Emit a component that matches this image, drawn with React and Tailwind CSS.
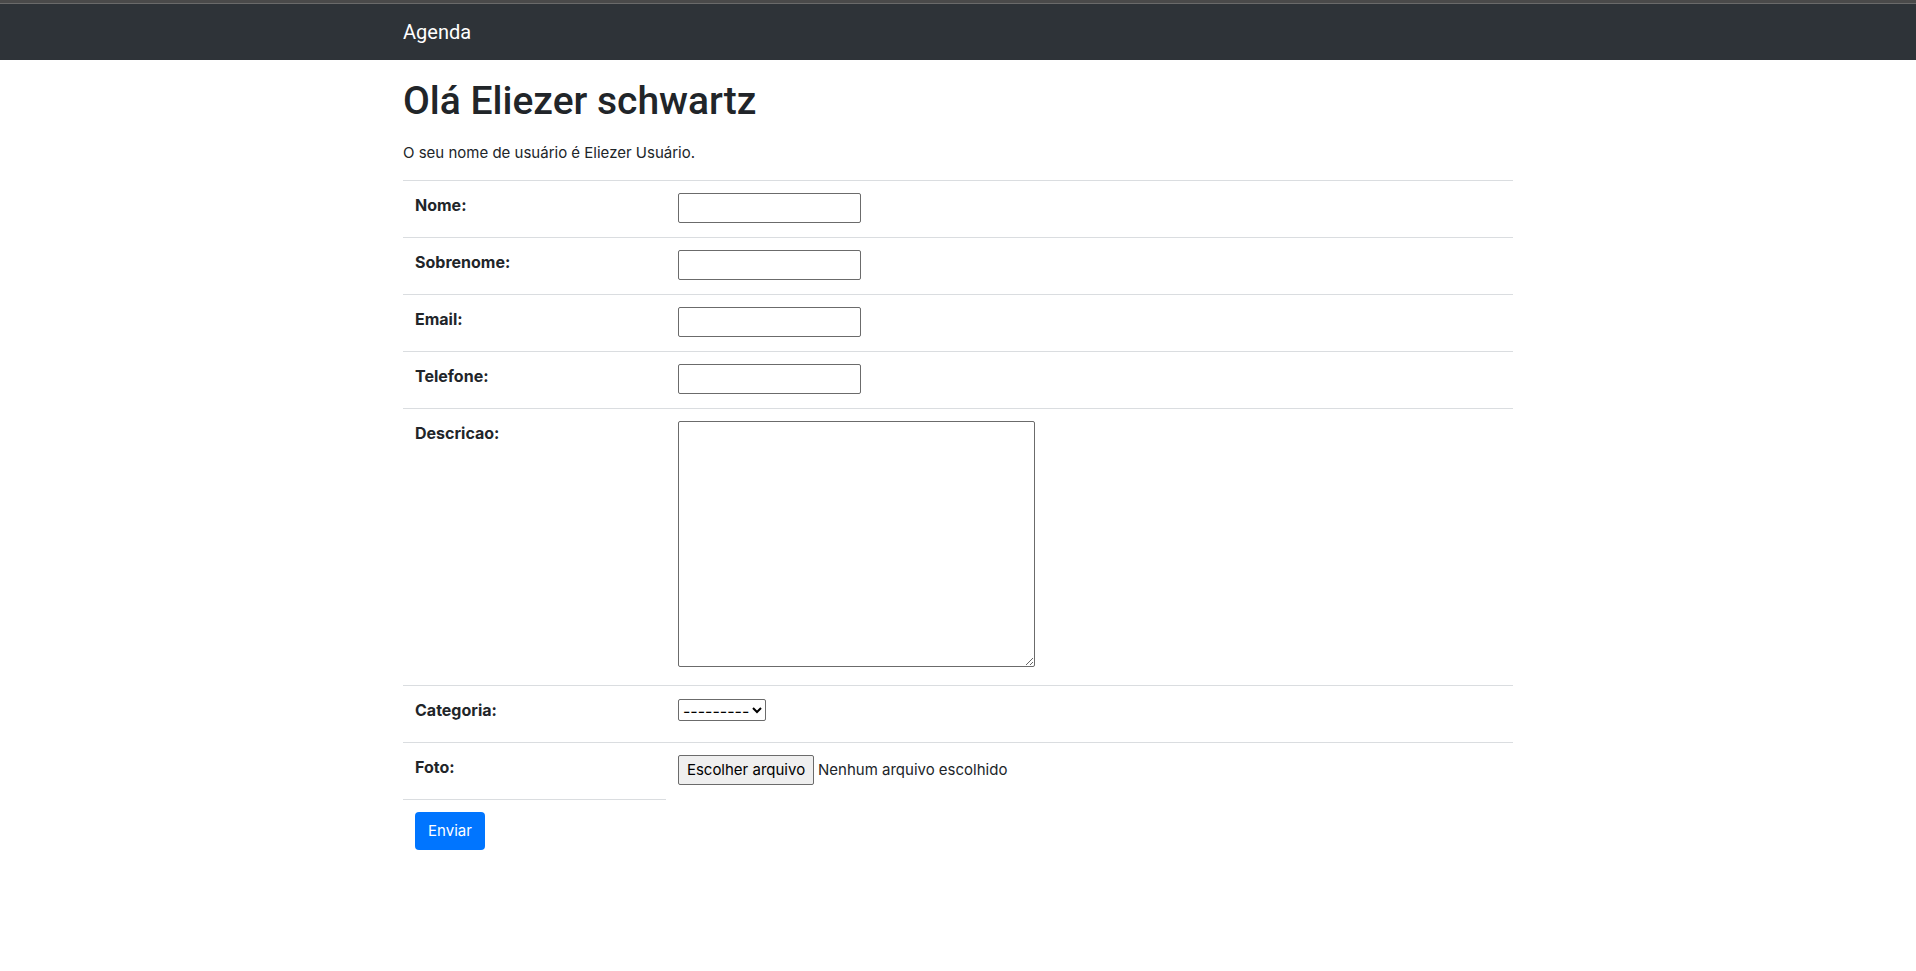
const textFields = [
  { id: 'nome', label: 'Nome:', type: 'text' },
  { id: 'sobrenome', label: 'Sobrenome:', type: 'text' },
  { id: 'email', label: 'Email:', type: 'email' },
  { id: 'telefone', label: 'Telefone:', type: 'tel' },
];

const control = 'border border-[#6b6b6b] bg-white text-black rounded-[2px]';

function Row({ id, label, children }) {
  return (
    <tr className="border-t border-[#dadde0]">
      <th scope="row" className="w-[263px] p-3 text-left align-top text-base font-bold">
        <label htmlFor={id}>{label}</label>
      </th>
      <td className="h-[57px] p-3 align-top">{children}</td>
    </tr>
  );
}

export default function App() {
  return (
    <div className="bg-white font-['Inter','Liberation_Sans',sans-serif] text-[15px] leading-6 text-[#212529]">
      <header className="border-t-[3px] border-[#4a4a4a]">
        <nav className="border-t border-[#6a6a6a] bg-[#2e3338]">
          <div className="mx-auto flex h-14 max-w-[1140px] items-center px-[15px]">
            <a href="#" className="font-['Roboto',sans-serif] text-[20px] leading-[30px] text-white">Agenda</a>
          </div>
        </nav>
      </header>
      <main className="mx-auto max-w-[1140px] px-[15px] pt-[17px]">
        <h1 className="font-['Roboto',sans-serif] text-[39px] leading-[48px] font-medium">Olá Eliezer schwartz</h1>
        <p className="mt-4 mb-[15px]">O seu nome de usuário é Eliezer Usuário.</p>
        <form onSubmit={(event) => event.preventDefault()}>
          <table className="w-full table-fixed border-collapse">
            <tbody>
              {textFields.map((field) => (
                <Row key={field.id} id={field.id} label={field.label}>
                  <input id={field.id} type={field.type} className={`${control} block h-[30px] w-[183px] px-0.5`} />
                </Row>
              ))}
              <Row id="descricao" label="Descricao:">
                <textarea id="descricao" className={`${control} mb-1.5 block h-[246px] w-[357px] resize p-0.5`} />
              </Row>
              <Row id="categoria" label="Categoria:">
                <select id="categoria" className={`${control} mt-px block h-[22px] w-[88px] text-base leading-5`}>
                  <option>---------</option>
                </select>
              </Row>
              <Row id="foto" label="Foto:">
                <div className="flex items-center gap-1">
                  <input id="foto" type="file" className="sr-only" />
                  <label htmlFor="foto" className="flex h-[30px] w-[136px] items-center justify-center rounded-[2px] border border-[#6b6b6b] bg-[#efefef] text-black">
                    Escolher arquivo
                  </label>
                  <span>Nenhum arquivo escolhido</span>
                </div>
              </Row>
              <tr>
                <td className="border-t border-[#dadde0] p-3">
                  <button type="submit" className="block h-[38px] w-[70px] rounded-[4px] bg-[#0075ff] text-white">Enviar</button>
                </td>
              </tr>
            </tbody>
          </table>
        </form>
      </main>
    </div>
  );
}
